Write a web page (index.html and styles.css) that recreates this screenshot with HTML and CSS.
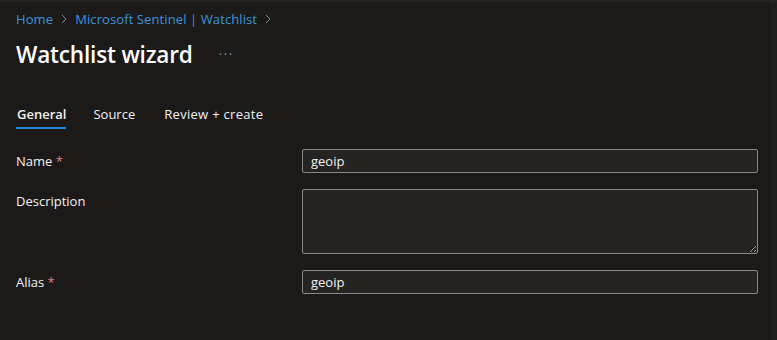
FILE: index.html
```html
<!DOCTYPE html>
<html lang="en">
<head>
    <meta charset="UTF-8">
    <title>Watchlist wizard</title>
    <link rel="stylesheet" href="styles.css">
</head>
<body>
    <div class="topline"></div>
    <div class="frame">
        <div class="page">
            <nav class="breadcrumb">
                <a href="#" class="crumb">Home</a>
                <svg class="chev" width="8" height="10" viewBox="0 0 8 10"><path d="M2 1 L6 5 L2 9" fill="none" stroke="#8a8886" stroke-width="1"/></svg>
                <a href="#" class="crumb">Microsoft Sentinel | Watchlist</a>
                <svg class="chev" width="8" height="10" viewBox="0 0 8 10"><path d="M2 1 L6 5 L2 9" fill="none" stroke="#8a8886" stroke-width="1"/></svg>
            </nav>

            <div class="title-row">
                <h1 class="title">Watchlist wizard</h1>
                <span class="more">&middot;&middot;&middot;</span>
            </div>

            <div class="tabs">
                <a href="#" class="tab active">General</a>
                <a href="#" class="tab">Source</a>
                <a href="#" class="tab">Review + create</a>
            </div>

            <div class="form">
                <label class="label">Name <span class="req">*</span></label>
                <input class="field" type="text" value="geoip">

                <label class="label">Description</label>
                <textarea class="field area"></textarea>

                <label class="label">Alias <span class="req">*</span></label>
                <input class="field" type="text" value="geoip">
            </div>
        </div>
        <div class="scroll-track"></div>
    </div>
</body>
</html>
```

FILE: styles.css
```css
body {
    margin: 0;
    background: #1b1a19;
    font-family: 'Open Sans', sans-serif;
    font-size: 13px;
    color: #f3f2f1;
    height: 340px;
    overflow: hidden;
}
.topline {
    height: 2px;
    background: #252423;
}
.frame {
    display: flex;
    height: 338px;
}
.page {
    flex: 1;
    padding: 0 13px 0 16px;
}
.scroll-track {
    width: 7px;
    background: #201f1e;
}
.breadcrumb {
    display: flex;
    align-items: center;
    gap: 7px;
    height: 34px;
    letter-spacing: 0.1px;
}
.crumb {
    color: #3a96dd;
    text-decoration: none;
    line-height: 34px;
}
.chev {
    display: block;
}
.title-row {
    display: flex;
    align-items: center;
    height: 36px;
}
.title {
    margin: 0;
    font-size: 22.6px;
    font-weight: 600;
    color: #ffffff;
    letter-spacing: -0.2px;
}
.more {
    margin-left: 26px;
    color: #a19f9d;
    font-size: 12px;
    letter-spacing: 2px;
}
.tabs {
    display: flex;
    margin-top: 29px;
    height: 30px;
}
.tab {
    color: #f3f2f1;
    text-decoration: none;
    line-height: 26px;
    margin-right: 26px;
    padding-left: 1px;
}
.tab:nth-child(2) {
    margin-right: 28px;
}
.tab:last-child {
    letter-spacing: 0.3px;
}
.tab.active {
    font-weight: 600;
    border-bottom: 2px solid #2b88d8;
    height: 26px;
}
.form {
    display: grid;
    grid-template-columns: 286px 1fr;
    row-gap: 16px;
    margin-top: 18px;
}
.label {
    line-height: 24px;
    color: #f3f2f1;
}
.req {
    color: #e37d80;
}
.field {
    box-sizing: border-box;
    height: 24px;
    margin: 0;
    padding: 0 8px;
    background: #252423;
    border: 1px solid #8a8886;
    border-radius: 2px;
    color: #f3f2f1;
    font-family: 'Open Sans', sans-serif;
    font-size: 13px;
    width: 456px;
}
.area {
    height: 65px;
    resize: vertical;
}
```
